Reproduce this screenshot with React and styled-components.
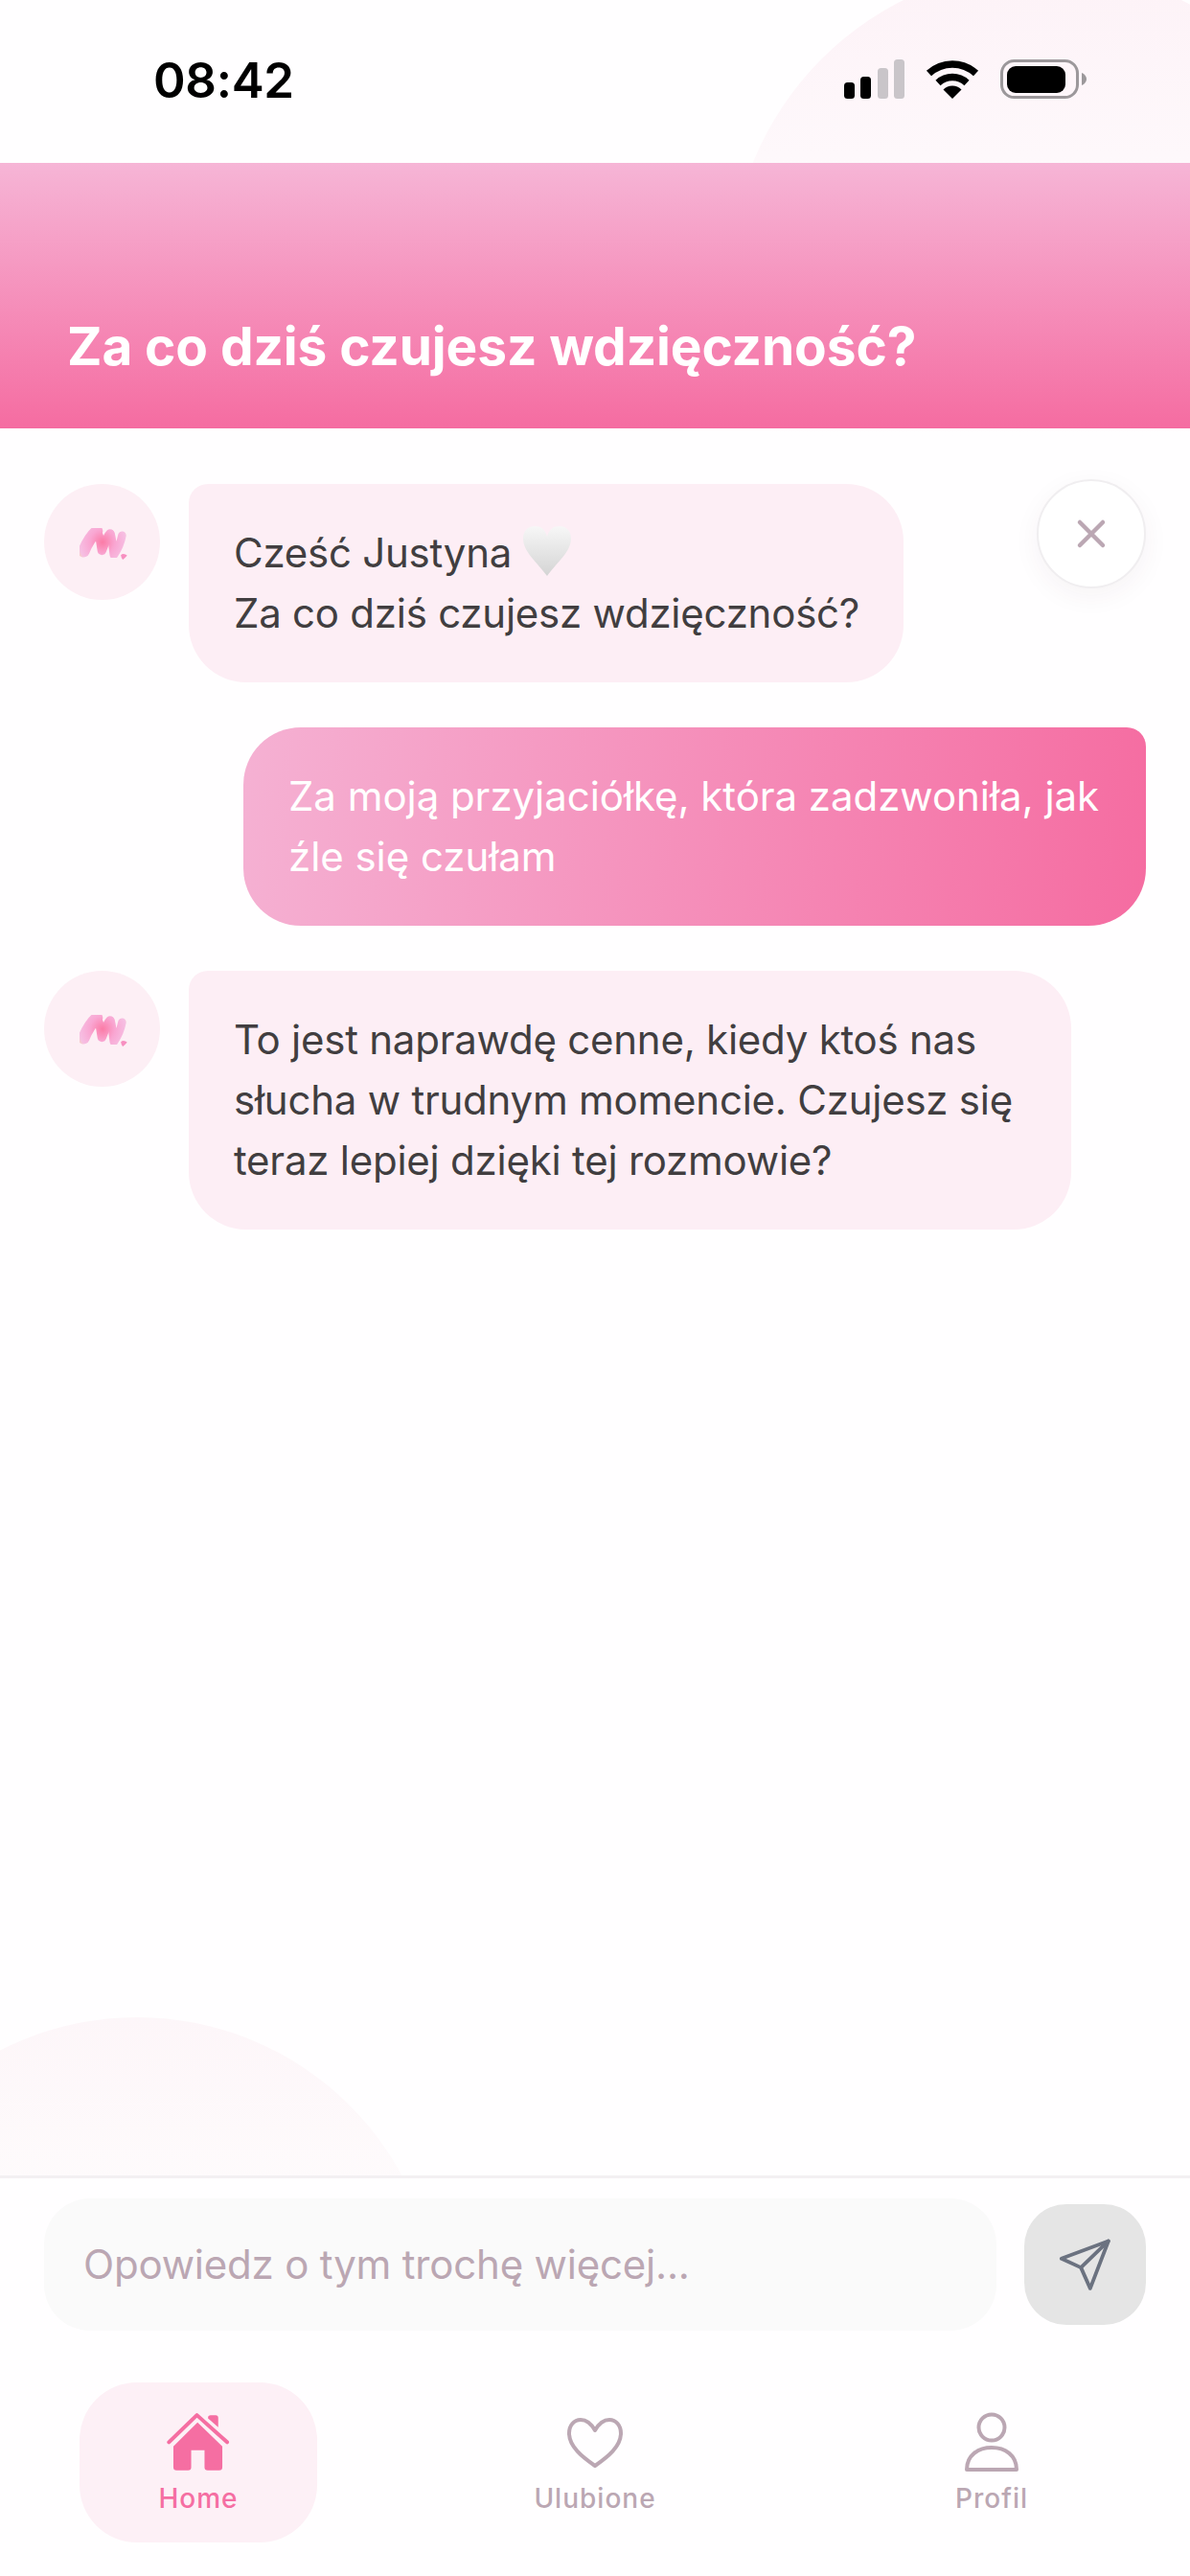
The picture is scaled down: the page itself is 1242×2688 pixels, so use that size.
import React from "react";
import styled, { createGlobalStyle } from "styled-components";

const Global = createGlobalStyle`
  html, body { margin: 0; padding: 0; background: #fffeff; }
  * { box-sizing: border-box; }
  body { font-family: Inter, "Noto Sans", sans-serif; }
`;

const Page = styled.div`
  position: relative;
  width: 1242px;
  height: 2688px;
  overflow: hidden;
  display: flex;
  flex-direction: column;
  background: #fffeff;
`;

const TopBlob = styled.div`
  position: absolute;
  left: 762px;
  top: -34px;
  width: 652px;
  height: 652px;
  border-radius: 50%;
  background: linear-gradient(180deg, #fdf2f7 0%, #fef8fb 30%, #fffeff 75%);
`;

const BottomBlob = styled.div`
  position: absolute;
  left: -171px;
  top: 2105px;
  width: 628px;
  height: 628px;
  border-radius: 50%;
  background: linear-gradient(180deg, #fdf6f9 0%, #fefbfc 30%, #fffeff 60%);
`;

const StatusBar = styled.div`
  position: relative;
  height: 170px;
  flex: none;
  display: flex;
  align-items: flex-start;
  justify-content: space-between;
  padding: 53px 108px 0 160px;
`;

const Time = styled.div`
  font-size: 51px;
  line-height: 62px;
  font-weight: 600;
  color: #000;
  letter-spacing: -0.3px;
`;

const StatusIcons = styled.div`
  display: flex;
  align-items: flex-start;
  padding-top: 9px;
  gap: 22px;
`;

const Header = styled.header`
  position: relative;
  height: 277px;
  flex: none;
  display: flex;
  align-items: flex-end;
  padding: 0 70px 53px;
  background: linear-gradient(180deg, #f6b5d6 0%, #f56ca1 100%);
`;

const Title = styled.h1`
  margin: 0;
  font-size: 55px;
  line-height: 66px;
  font-weight: 700;
  letter-spacing: -0.12px;
  color: #fff;
`;

const Chat = styled.main`
  position: relative;
  flex: 1;
  display: flex;
  flex-direction: column;
  gap: 47px;
  padding: 58px 46px 0;
`;

const Row = styled.div`
  display: flex;
  align-items: flex-start;
  justify-content: ${(p) => (p.$mine ? "flex-end" : "flex-start")};
  gap: 30px;
`;

const Avatar = styled.div`
  width: 121px;
  height: 121px;
  flex: none;
  border-radius: 50%;
  background: #fdeff5;
  display: flex;
  align-items: center;
  justify-content: center;
`;

const Bubble = styled.div`
  width: ${(p) => p.$width}px;
  padding: 40px 0 41px 47px;
  font-size: 42px;
  line-height: 63px;
  font-weight: 400;
  letter-spacing: ${(p) => (p.$mine ? "-0.05px" : "-0.24px")};
  color: ${(p) => (p.$mine ? "#fff" : "#413e40")};
  background: ${(p) =>
    p.$mine ? "linear-gradient(96deg, #f5b1d3 0%, #f56ca1 100%)" : "#fdeef5"};
  border-radius: ${(p) => (p.$mine ? "60px 20px 60px 60px" : "20px 60px 60px 60px")};
  white-space: nowrap;
`;

const EmojiHeart = styled.svg`
  width: 54px;
  height: 52px;
  margin-left: 10px;
  vertical-align: -9px;
`;

const CloseButton = styled.button`
  position: absolute;
  top: 53px;
  right: 46px;
  width: 114px;
  height: 114px;
  padding: 0;
  border-radius: 50%;
  border: 2px solid #f0eef0;
  background: #fff;
  box-shadow: 0 8px 28px rgba(80, 40, 60, 0.05);
  display: flex;
  align-items: center;
  justify-content: center;
`;

const Composer = styled.div`
  position: relative;
  flex: none;
  display: flex;
  align-items: center;
  gap: 29px;
  height: 182px;
  padding: 0 46px;
  background: #fffeff;
  border-top: 3px solid #f3f0f2;
`;

const Field = styled.input`
  flex: 1;
  min-width: 0;
  height: 138px;
  padding: 0 41px;
  border: 0;
  outline: 0;
  border-radius: 48px;
  background: #fafafa;
  font-family: Inter, "Noto Sans", sans-serif;
  font-size: 42px;
  font-weight: 400;
  letter-spacing: -0.2px;
  color: #bba7b3;
  &::placeholder { color: #bba7b3; opacity: 1; }
`;

const SendButton = styled.button`
  width: 127px;
  height: 126px;
  flex: none;
  padding: 0;
  border: 0;
  border-radius: 44px;
  background: #e5e5e5;
  display: flex;
  align-items: center;
  justify-content: center;
`;

const Nav = styled.nav`
  position: relative;
  flex: none;
  display: grid;
  grid-template-columns: repeat(3, 1fr);
  justify-items: center;
  height: 236px;
  padding-top: 34px;
  background: #fffeff;
`;

const NavItem = styled.div`
  width: 248px;
  height: 167px;
  padding-top: 30px;
  border-radius: 60px;
  display: flex;
  flex-direction: column;
  align-items: center;
  background: ${(p) => (p.$active ? "#fdf0f6" : "transparent")};
  color: ${(p) => (p.$active ? "#f56ea2" : "#bba7b3")};
`;

const NavIcon = styled.div`
  height: 65px;
  display: flex;
  align-items: center;
  justify-content: center;
`;

const NavLabel = styled.span`
  margin-top: 9px;
  font-size: 28px;
  line-height: 34px;
  font-weight: 450;
  letter-spacing: 1px;
`;

const Signal = () => (
  <svg width="63" height="41" viewBox="0 0 63 41">
    <rect x="0" y="24" width="11" height="17" rx="3.5" fill="#000" />
    <rect x="17" y="18" width="11" height="23" rx="3.5" fill="#000" />
    <rect x="35" y="9" width="11" height="32" rx="3.5" fill="#c9c5c9" />
    <rect x="52" y="0" width="11" height="41" rx="3.5" fill="#c9c5c9" />
  </svg>
);

const Wifi = () => (
  <svg width="56" height="41" viewBox="0 0 56 41" fill="none">
    <path d="M3.5 14.5 A36 36 0 0 1 52.5 14.5" stroke="#000" strokeWidth="7.5" />
    <path d="M13 24.5 A22 22 0 0 1 43 24.5" stroke="#000" strokeWidth="7.5" />
    <path d="M28 41 L18.5 31.5 A13.5 13.5 0 0 1 37.5 31.5 Z" fill="#000" />
  </svg>
);

const Battery = () => (
  <svg width="90" height="41" viewBox="0 0 90 41" fill="none">
    <rect x="1.5" y="1.5" width="79" height="38" rx="13" stroke="#9c989b" strokeWidth="3" />
    <rect x="7" y="7" width="61" height="28" rx="9" fill="#000" />
    <path d="M85 14 C88 15 90 18 90 20.5 C90 23 88 26 85 27 Z" fill="#9c989b" />
  </svg>
);

const LogoMark = ({ id }) => (
  <svg width="54" height="40" viewBox="150 166 164 120" fill="none">
    <defs>
      <radialGradient id={id} gradientUnits="userSpaceOnUse" cx="232" cy="225" r="88">
        <stop offset="0" stopColor="#fb7ba6" />
        <stop offset="0.45" stopColor="#f9a6d2" />
        <stop offset="0.85" stopColor="#f6bfe3" />
        <stop offset="1" stopColor="#f6d6c0" />
      </radialGradient>
      <filter id={`${id}-soft`} x="-10%" y="-10%" width="120%" height="120%">
        <feGaussianBlur stdDeviation="2" />
      </filter>
    </defs>
    <g stroke={`url(#${id})`} strokeLinecap="round" strokeLinejoin="round" filter={`url(#${id}-soft)`}>
      <path d="M172 254 C184 226 198 204 214 190" strokeWidth="38" />
      <path d="M214 192 C224 202 226 230 230 252 C238 232 246 208 256 198" strokeWidth="28" />
      <path d="M258 200 C264 220 264 244 268 266 C280 248 290 226 294 204" strokeWidth="26" />
    </g>
    <path d="M290 266 C296 260 304 262 310 268 C305 274 300 278 296 281 C293 277 291 272 290 266 Z" fill="#f78fc0" />
  </svg>
);

const WhiteHeart = () => (
  <EmojiHeart viewBox="0 0 54 52">
    <defs>
      <linearGradient id="hGrad" x1="0" y1="0" x2="0" y2="1">
        <stop offset="0" stopColor="#f7f7f7" />
        <stop offset="1" stopColor="#d4d4d4" />
      </linearGradient>
    </defs>
    <path d="M27 52 C17 38 2 27 2 13 C2 5 7 0 14 0 C20 0 25 3 27 11 C29 3 34 0 40 0 C47 0 52 5 52 13 C52 27 37 38 27 52 Z" fill="url(#hGrad)" />
  </EmojiHeart>
);

const Close = () => (
  <svg width="32" height="32" viewBox="0 0 32 32" fill="none" stroke="#bba7b3" strokeWidth="4.5" strokeLinecap="round">
    <path d="M4 4 L28 28 M28 4 L4 28" />
  </svg>
);

const Send = () => (
  <svg width="56" height="56" viewBox="195 162 162 162" fill="none" stroke="#6b7280" strokeWidth="11" strokeLinejoin="round" strokeLinecap="round">
    <path d="M345 172 L203 225 L262 252 L290 315 Z" />
    <path d="M345 172 L262 252" />
  </svg>
);

const HomeIcon = () => (
  <svg width="68" height="65" viewBox="340 140 205 195" fill="#f56ea2">
    <path d="M350 237 L438 152 L533 237" fill="none" stroke="#f56ea2" strokeWidth="12" strokeLinecap="round" strokeLinejoin="round" />
    <path d="M473 160 Q473 152 481 152 L497 152 Q505 152 505 160 L505 190 L473 162 Z" />
    <path d="M364 250 L440 175 L518 250 L518 316 Q518 326 508 326 L472 326 Q462 326 462 316 L462 262 L420 262 L420 316 Q420 326 410 326 L374 326 Q364 326 364 316 Z" />
  </svg>
);

const HeartIcon = () => (
  <svg width="58" height="54" viewBox="0 0 58 54" fill="none" stroke="#bba7b3" strokeWidth="4" strokeLinejoin="round">
    <path d="M29 14 C25 7 20 3 14 3 C7 3 2 9 2 17 C2 31 16 42 29 51 C42 42 56 31 56 17 C56 9 51 3 44 3 C38 3 33 7 29 14 Z" />
  </svg>
);

const PersonIcon = () => (
  <svg width="58" height="63" viewBox="0 0 58 63" fill="none" stroke="#bba7b3" strokeWidth="4" strokeLinejoin="round">
    <circle cx="29" cy="16" r="13.5" />
    <path d="M3 60 C3 45 15 37 29 37 C43 37 55 45 55 60 Z" />
  </svg>
);

const AssistantRow = ({ id, width, children }) => (
  <Row>
    <Avatar>
      <LogoMark id={id} />
    </Avatar>
    <Bubble $width={width}>{children}</Bubble>
  </Row>
);

export default function App() {
  return (
    <Page>
      <Global />
      <TopBlob />
      <BottomBlob />
      <StatusBar>
        <Time>08:42</Time>
        <StatusIcons>
          <Signal />
          <Wifi />
          <Battery />
        </StatusIcons>
      </StatusBar>
      <Header>
        <Title>Za co dziś czujesz wdzięczność?</Title>
      </Header>
      <Chat>
        <AssistantRow id="logoA" width={746}>
          Cześć Justyna
          <WhiteHeart />
          <br />
          Za co dziś czujesz wdzięczność?
        </AssistantRow>
        <Row $mine>
          <Bubble $mine $width={942}>
            Za moją przyjaciółkę, która zadzwoniła, jak
            <br />
            źle się czułam
          </Bubble>
        </Row>
        <AssistantRow id="logoB" width={921}>
          To jest naprawdę cenne, kiedy ktoś nas
          <br />
          słucha w trudnym momencie. Czujesz się
          <br />
          teraz lepiej dzięki tej rozmowie?
        </AssistantRow>
        <CloseButton aria-label="Zamknij">
          <Close />
        </CloseButton>
      </Chat>
      <Composer>
        <Field placeholder="Opowiedz o tym trochę więcej..." />
        <SendButton aria-label="Wyślij">
          <Send />
        </SendButton>
      </Composer>
      <Nav>
        <NavItem $active>
          <NavIcon><HomeIcon /></NavIcon>
          <NavLabel>Home</NavLabel>
        </NavItem>
        <NavItem>
          <NavIcon><HeartIcon /></NavIcon>
          <NavLabel>Ulubione</NavLabel>
        </NavItem>
        <NavItem>
          <NavIcon><PersonIcon /></NavIcon>
          <NavLabel>Profil</NavLabel>
        </NavItem>
      </Nav>
    </Page>
  );
}
